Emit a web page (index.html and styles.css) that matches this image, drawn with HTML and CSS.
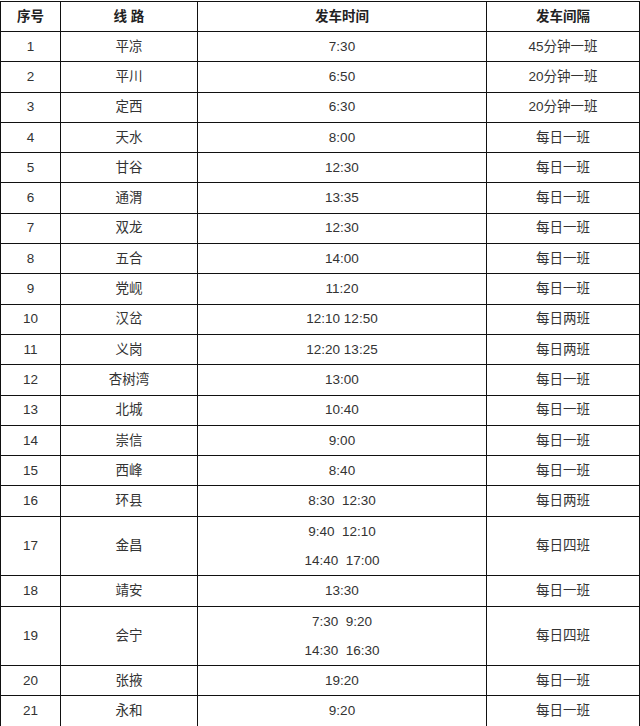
FILE: index.html
```html
<!DOCTYPE html>
<html lang="zh">
<head>
<meta charset="utf-8">
<title>发车时间表</title>
<link rel="stylesheet" href="styles.css">
</head>
<body>
<table class="sched">
<colgroup>
<col class="c1"><col class="c2"><col class="c3"><col class="c4">
</colgroup>
<thead>
<tr class="hd"><th>序号</th><th>线 路</th><th>发车时间</th><th>发车间隔</th></tr>
</thead>
<tbody>
<tr><td>1</td><td>平凉</td><td>7:30</td><td>45分钟一班</td></tr>
<tr><td>2</td><td>平川</td><td>6:50</td><td>20分钟一班</td></tr>
<tr><td>3</td><td>定西</td><td>6:30</td><td>20分钟一班</td></tr>
<tr><td>4</td><td>天水</td><td>8:00</td><td>每日一班</td></tr>
<tr><td>5</td><td>甘谷</td><td>12:30</td><td>每日一班</td></tr>
<tr><td>6</td><td>通渭</td><td>13:35</td><td>每日一班</td></tr>
<tr><td>7</td><td>双龙</td><td>12:30</td><td>每日一班</td></tr>
<tr><td>8</td><td>五合</td><td>14:00</td><td>每日一班</td></tr>
<tr><td>9</td><td>党岘</td><td>11:20</td><td>每日一班</td></tr>
<tr><td>10</td><td>汉岔</td><td>12:10 12:50</td><td>每日两班</td></tr>
<tr><td>11</td><td>义岗</td><td>12:20 13:25</td><td>每日两班</td></tr>
<tr><td>12</td><td>杏树湾</td><td>13:00</td><td>每日一班</td></tr>
<tr><td>13</td><td>北城</td><td>10:40</td><td>每日一班</td></tr>
<tr><td>14</td><td>崇信</td><td>9:00</td><td>每日一班</td></tr>
<tr><td>15</td><td>西峰</td><td>8:40</td><td>每日一班</td></tr>
<tr><td>16</td><td>环县</td><td>8:30&nbsp;&nbsp;12:30</td><td>每日两班</td></tr>
<tr class="dbl"><td>17</td><td>金昌</td><td><div class="ln">9:40&nbsp;&nbsp;12:10</div><div class="ln">14:40&nbsp;&nbsp;17:00</div></td><td>每日四班</td></tr>
<tr><td>18</td><td>靖安</td><td>13:30</td><td>每日一班</td></tr>
<tr class="dbl"><td>19</td><td>会宁</td><td><div class="ln">7:30&nbsp;&nbsp;9:20</div><div class="ln">14:30&nbsp;&nbsp;16:30</div></td><td>每日四班</td></tr>
<tr><td>20</td><td>张掖</td><td>19:20</td><td>每日一班</td></tr>
<tr><td>21</td><td>永和</td><td>9:20</td><td>每日一班</td></tr>
</tbody>
</table>
</body>
</html>
```
FILE: styles.css
```css
html, body {
  margin: 0;
  padding: 0;
  background: #fff;
}
body {
  padding-top: 1px;
  font-family: "Liberation Sans", "Noto Sans CJK SC", sans-serif;
  font-size: 13.5px;
  color: #333;
}
.sched {
  border-collapse: collapse;
  table-layout: fixed;
  width: 639px;
}
.c1 { width: 60px; }
.c2 { width: 137px; }
.c3 { width: 289px; }
.c4 { width: 153px; }
.sched th,
.sched td {
  border: 1px solid #111;
  padding: 0;
  text-align: center;
  vertical-align: middle;
  height: 29.3px;
  line-height: 18px;
}
.sched th {
  font-weight: bold;
  color: #222;
  height: 29px;
}
.sched tr.dbl td {
  height: 58.5px;
}
.ln {
  line-height: 29px;
}
```
